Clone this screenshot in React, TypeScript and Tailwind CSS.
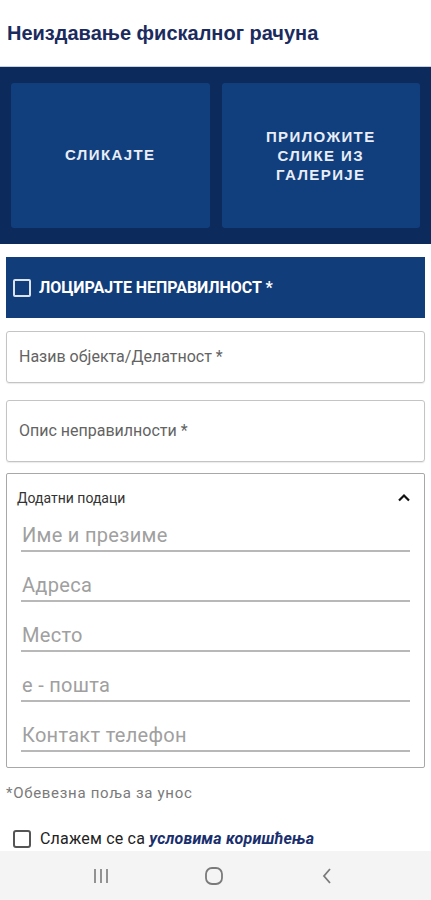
import React from 'react';

const extraFields = ['Име и презиме', 'Адреса', 'Место', 'е - пошта', 'Контакт телефон'];

const font = { fontFamily: 'Roboto, "Noto Sans", sans-serif' };

const App: React.FC = () => {
  return (
    <div className="relative h-[900px] w-[431px] overflow-hidden bg-white font-['Roboto',sans-serif]">
      <header className="flex h-[66px] items-start px-[7px] pt-[18px]">
        <h1 className="font-['Liberation_Sans',sans-serif] text-[20px] font-bold tracking-[0px] text-[#1b2b5e]">
          Неиздавање фискалног рачуна
        </h1>
      </header>

      <section className="grid h-[178px] grid-cols-2 gap-[12px] border-t border-[#c9d0dc] bg-[#0d2a5d] px-[11px] pt-[16px]">
        <button className="flex h-[145px] items-center justify-center rounded-[3px] bg-[#113f7e] font-['Liberation_Sans',sans-serif] text-[15px] font-bold tracking-[1.4px] text-[#e8edf6]">
          СЛИКАЈТЕ
        </button>
        <button className="flex h-[145px] flex-col items-center justify-center rounded-[3px] bg-[#113f7e] font-['Liberation_Sans',sans-serif] text-[15px] font-bold leading-[19px] tracking-[1.4px] text-[#e8edf6]">
          <span>ПРИЛОЖИТЕ</span>
          <span>СЛИКЕ ИЗ</span>
          <span>ГАЛЕРИЈЕ</span>
        </button>
      </section>

      <div className="mx-[6px] mt-[13px] flex h-[61px] items-center gap-[8px] bg-[#123d7b] pl-[7px]">
        <span className="h-[18px] w-[18px] rounded-[2px] border-2 border-[#dbe3f0]" />
        <span className="text-[16px] font-bold tracking-[-0.05px] text-white">ЛОЦИРАЈТЕ НЕПРАВИЛНОСТ *</span>
      </div>

      <div className="mx-[6px] mt-[13px] flex h-[52px] items-center rounded-[3px] border border-[#c4c4c4] px-[12px] shadow-[0_1px_1px_rgba(0,0,0,0.08)]">
        <span className="text-[16px] text-[#636363]">Назив објекта/Делатност *</span>
      </div>

      <div className="mx-[6px] mt-[17px] flex h-[62px] items-center rounded-[3px] border border-[#c4c4c4] px-[12px] shadow-[0_1px_1px_rgba(0,0,0,0.08)]">
        <span className="text-[16px] text-[#636363]">Опис неправилности *</span>
      </div>

      <div className="mx-[6px] mt-[11px] h-[295px] rounded-[2px] border border-[#a8a8a8]">
        <div className="flex h-[40px] items-center justify-between pl-[10px] pr-[13px] pt-[8px]">
          <span className="text-[14px] text-[#333]">Додатни подаци</span>
          <svg width="14" height="10" viewBox="0 0 14 10" fill="none">
            <path d="M2 7.5 L7 2.5 L12 7.5" stroke="#111" strokeWidth="2.2" />
          </svg>
        </div>
        <div className="flex flex-col px-[14px]">
          {extraFields.map((f, i) => (
            <div
              key={f}
              className={`flex h-[38px] items-end border-b-2 border-[#b8b8b8] pb-[3px] pl-[1px] ${i === 0 ? '' : 'mt-[12px]'}`}
            >
              <span className="text-[20px] leading-[24px] tracking-[0.3px] text-[#a0a0a0]" style={font}>
                {f}
              </span>
            </div>
          ))}
        </div>
      </div>

      <p className="mt-[14px] px-[6px] text-[15px] tracking-[0.7px] text-[#7a7a7a]">*Обевезна поља за унос</p>

      <div className="mt-[22px] flex items-center gap-[9px] pl-[13px]">
        <span className="h-[18px] w-[18px] rounded-[3px] border-2 border-[#555]" />
        <span className="text-[16px] tracking-[0.2px] text-[#222]">
          Слажем се са <span className="font-bold italic text-[#1a2f6e]">условима коришћења</span>
        </span>
      </div>

      <nav className="absolute bottom-0 left-0 flex h-[49px] w-full items-center justify-between bg-[#f4f4f4] pl-[92px] pr-[98px]">
        <svg width="18" height="16" viewBox="0 0 18 16">
          <path d="M3 1 V15 M9 1 V15 M15 1 V15" stroke="#7a7a7a" strokeWidth="1.6" />
        </svg>
        <svg width="20" height="20" viewBox="0 0 20 20" className="-ml-[3px]">
          <rect x="2" y="2" width="16" height="16" rx="6" fill="none" stroke="#7a7a7a" strokeWidth="1.8" />
        </svg>
        <svg width="12" height="18" viewBox="0 0 12 18">
          <path d="M9 2 L3 9 L9 16" fill="none" stroke="#7a7a7a" strokeWidth="1.8" />
        </svg>
      </nav>
    </div>
  );
};

export default App;
